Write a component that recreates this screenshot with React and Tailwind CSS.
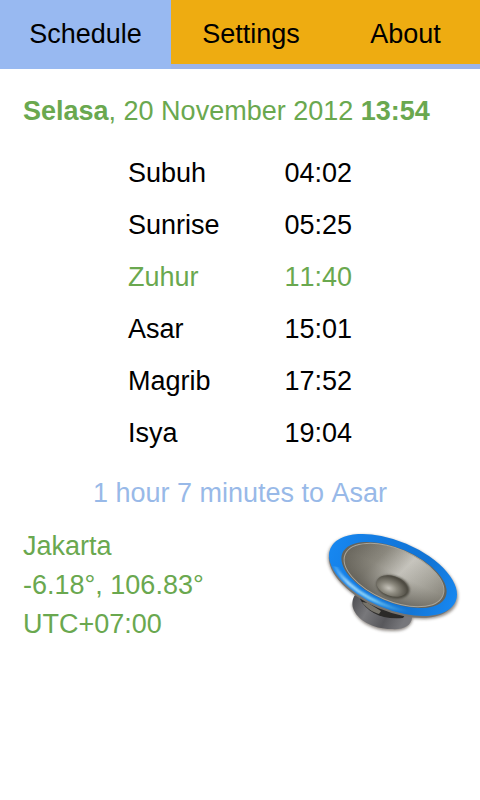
import React from "react";
import { useState } from "react";

const tabs = ["Schedule", "Settings", "About"];

const prayerTimes = [
  { name: "Subuh", time: "04:02" },
  { name: "Sunrise", time: "05:25" },
  { name: "Zuhur", time: "11:40" },
  { name: "Asar", time: "15:01" },
  { name: "Magrib", time: "17:52" },
  { name: "Isya", time: "19:04" },
];

const SpeakerIcon = () => (
  <svg viewBox="0 0 140 112" className="h-[112px] w-[140px]" aria-hidden="true">
    <defs>
      <linearGradient id="rim" x1="0" y1="0" x2="1" y2="0">
        <stop offset="0" stopColor="#1787f0" />
        <stop offset="0.35" stopColor="#1279df" />
        <stop offset="0.7" stopColor="#1274d4" />
        <stop offset="1" stopColor="#1787f0" />
      </linearGradient>
      <linearGradient id="cone" x1="0" y1="0.3" x2="1" y2="0.5">
        <stop offset="0" stopColor="#66635a" />
        <stop offset="0.3" stopColor="#8f8c82" />
        <stop offset="0.55" stopColor="#d2d0c9" />
        <stop offset="0.8" stopColor="#b0aea5" />
        <stop offset="1" stopColor="#8f8c82" />
      </linearGradient>
      <linearGradient id="coneShade" x1="0.5" y1="0" x2="0.4" y2="1">
        <stop offset="0" stopColor="#6b685f" stopOpacity="0.1" />
        <stop offset="0.45" stopColor="#6b685f" stopOpacity="0.15" />
        <stop offset="1" stopColor="#4b4840" stopOpacity="0.75" />
      </linearGradient>
      <radialGradient id="cap" cx="0.42" cy="0.65" r="0.6">
        <stop offset="0" stopColor="#c6c3ba" />
        <stop offset="0.45" stopColor="#8b887d" />
        <stop offset="1" stopColor="#4f4c43" />
      </radialGradient>
      <linearGradient id="magnet" x1="0" y1="0" x2="1" y2="0.3">
        <stop offset="0" stopColor="#4c4c50" />
        <stop offset="0.35" stopColor="#78787b" />
        <stop offset="0.7" stopColor="#58585c" />
        <stop offset="1" stopColor="#77777b" />
      </linearGradient>
      <linearGradient id="shine" x1="0" y1="0" x2="1" y2="0">
        <stop offset="0" stopColor="#8fd6ff" stopOpacity="0" />
        <stop offset="0.2" stopColor="#b5e6ff" />
        <stop offset="0.45" stopColor="#7fd0f5" />
        <stop offset="0.75" stopColor="#3fa0d8" stopOpacity="0" />
      </linearGradient>
      <filter id="soft" x="-20%" y="-20%" width="140%" height="140%">
        <feGaussianBlur stdDeviation="1.5" />
      </filter>
      <filter id="glow" x="-20%" y="-20%" width="140%" height="140%">
        <feGaussianBlur stdDeviation="0.8" />
      </filter>
      <clipPath id="lowerRim">
        <path d="M0 36 L68 46 L125 84 L140 112 L0 112 Z" />
      </clipPath>
    </defs>

    {/* shadow under the rim and the magnet */}
    <g fill="#4a4038" opacity="0.6" filter="url(#soft)">
      <ellipse cx="68" cy="48" rx="69" ry="35" transform="rotate(23 68 48)" />
      <path d="M27 74 C27 89 45 102 66 102 C80 103 88 97 88 87 Z" />
    </g>

    {/* magnet */}
    <path d="M30 66 C27 70 27 75 28 79 C32 91 48 100 66 100 C78 101 86 97 87 89 L84 80 Z" fill="url(#magnet)" />
    <path d="M35 70 C42 83 56 91 78 89 L84 80 L38 62 Z" fill="#2b2a28" />
    <path d="M37 73 C42 80 48 83 54 85 L56 82 L43 74 Z" fill="#77746b" />

    {/* rim */}
    <ellipse cx="67" cy="48" rx="67" ry="34" transform="rotate(23 67 48)" fill="#77736e" />
    <ellipse cx="68" cy="46" rx="68" ry="34" transform="rotate(23 68 46)" fill="url(#rim)" />
    <g clipPath="url(#lowerRim)">
      <ellipse
        cx="68"
        cy="46"
        rx="64"
        ry="31"
        transform="rotate(23 68 46)"
        fill="none"
        stroke="url(#shine)"
        strokeWidth="3"
        filter="url(#glow)"
      />
    </g>

    {/* cone */}
    <ellipse cx="69" cy="46" rx="56" ry="27" transform="rotate(23 69 46)" fill="#66645c" />
    <ellipse cx="69" cy="46" rx="53" ry="26" transform="rotate(23 69 46)" fill="url(#cone)" />
    <ellipse
      cx="69"
      cy="46"
      rx="53"
      ry="26"
      transform="rotate(23 69 46)"
      fill="url(#coneShade)"
      stroke="#a8a59b"
      strokeWidth="1"
    />

    {/* dust cap */}
    <ellipse cx="68" cy="58" rx="17" ry="11" transform="rotate(18 68 58)" fill="#4b483f" filter="url(#glow)" />
    <ellipse cx="67" cy="57" rx="16" ry="10" transform="rotate(18 67 57)" fill="url(#cap)" />
  </svg>
);

const App = () => {
  const [activeTab, setActiveTab] = useState("Schedule");

  return (
    <div className="min-h-screen bg-white font-['Liberation_Sans',Arial,sans-serif] text-[27px] leading-10 text-black [font-kerning:none]">
      <nav className="grid grid-cols-[171fr_160fr_149fr] border-b-5 border-[#9cb4e8] bg-[#eeac11]">
        {tabs.map((tab) => (
          <button
            key={tab}
            onClick={() => setActiveTab(tab)}
            className={
              activeTab === tab
                ? "-mb-[5px] bg-[#98b9f1] pt-3.5 pb-[15px]"
                : "pt-3.5 pb-2.5"
            }
          >
            {tab}
          </button>
        ))}
      </nav>

      <main className="px-[23px] pt-[22px]">
        <h1 className="text-[#6aa84f]">
          <b>Selasa</b>, 20 November 2012 <b>13:54</b>
        </h1>

        <table className="mx-auto mt-4 w-56">
          <tbody>
            {prayerTimes.map(({ name, time }) => (
              <tr
                key={name}
                className={name === "Zuhur" ? "h-[52px] text-[#6aa84f]" : "h-[52px]"}
              >
                <th scope="row" className="text-left font-normal">
                  {name}
                </th>
                <td className="text-right">{time}</td>
              </tr>
            ))}
          </tbody>
        </table>

        <p className="mt-3.5 text-center text-[#98b9e8]">1 hour 7 minutes to Asar</p>

        <section className="mt-3.5 flex items-start justify-between leading-[39px] text-[#6aa84f]">
          <address className="not-italic">
            Jakarta
            <br />
            -6.18°, 106.83°
            <br />
            UTC+07:00
          </address>
          <button aria-label="Play adhan" className="-mr-2 pt-0.5">
            <SpeakerIcon />
          </button>
        </section>
      </main>
    </div>
  );
};

export default App;
